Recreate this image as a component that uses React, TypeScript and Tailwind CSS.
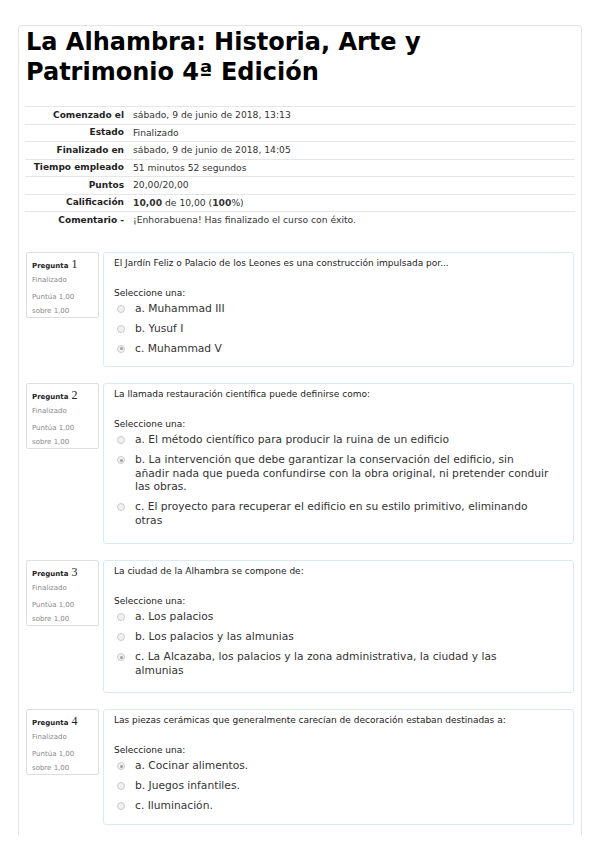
import React from "react";

type Opt = { label: React.ReactNode; checked?: boolean };
type Q = { n: number; text: string; pb: string; options: Opt[] };

const summary: [string, React.ReactNode][] = [
  ["Comenzado el", "sábado, 9 de junio de 2018, 13:13"],
  ["Estado", "Finalizado"],
  ["Finalizado en", "sábado, 9 de junio de 2018, 14:05"],
  ["Tiempo empleado", "51 minutos 52 segundos"],
  ["Puntos", "20,00/20,00"],
  [
    "Calificación",
    <>
      <b>10,00</b> de 10,00 (<b>100</b>%)
    </>,
  ],
  ["Comentario -", "¡Enhorabuena! Has finalizado el curso con éxito."],
];

const questions: Q[] = [
  {
    n: 1,
    pb: "pb-[11px]",
    text: "El Jardín Feliz o Palacio de los Leones es una construcción impulsada por...",
    options: [{ label: "a. Muhammad III" }, { label: "b. Yusuf I" }, { label: "c. Muhammad V", checked: true }],
  },
  {
    n: 2,
    pb: "pb-[16px]",
    text: "La llamada restauración científica puede definirse como:",
    options: [
      { label: "a. El método científico para producir la ruina de un edificio" },
      {
        label: (
          <>
            b. La intervención que debe garantizar la conservación del edificio, sin
            <br />
            añadir nada que pueda confundirse con la obra original, ni pretender conduir
            <br />
            las obras.
          </>
        ),
        checked: true,
      },
      { label: "c. El proyecto para recuperar el edificio en su estilo primitivo, eliminando otras" },
    ],
  },
  {
    n: 3,
    pb: "pb-[15px]",
    text: "La ciudad de la Alhambra se compone de:",
    options: [
      { label: "a. Los palacios" },
      { label: "b. Los palacios y las almunias" },
      {
        label: (
          <>
            c. La Alcazaba, los palacios y la zona administrativa, la ciudad y las
            <br />
            almunias
          </>
        ),
        checked: true,
      },
    ],
  },
  {
    n: 4,
    pb: "pb-[11px]",
    text: "Las piezas cerámicas que generalmente carecían de decoración estaban destinadas a:",
    options: [
      { label: "a. Cocinar alimentos.", checked: true },
      { label: "b. Juegos infantiles." },
      { label: "c. Iluminación." },
    ],
  },
];

function Radio({ checked }: { checked?: boolean }) {
  return (
    <span className="mt-[3px] flex h-[8px] w-[8px] shrink-0 items-center justify-center rounded-full border border-[#cccccc] bg-[#f0f0f0]">
      {checked && <span className="h-[3px] w-[3px] rounded-full bg-[#a0a0a0]" />}
    </span>
  );
}

function Question({ q }: { q: Q }) {
  return (
    <div className="flex gap-[4px] pl-[7px] pr-[7px]">
      <div className="h-[66px] w-[73px] shrink-0 rounded-[2px] border border-[#dedede] bg-white pl-[5px] pt-[5px] text-[7px] leading-[9px] text-[#888]">
        <div className="flex items-baseline gap-[3px] text-[#222]">
          <span className="font-bold">Pregunta</span>
          <span className="font-['Liberation_Serif',serif] text-[12px] leading-[12px]">{q.n}</span>
        </div>
        <div className="mt-[5px]">Finalizado</div>
        <div className="mt-[5px] leading-[14px]">
          Puntúa 1,00
          <br />
          sobre 1,00
        </div>
      </div>
      <div className={`flex-1 rounded-[3px] border border-[#d6ecf2] bg-white pl-[10px] pr-[12px] pt-[4px] ${q.pb}`}>
        <div className="text-[9px] leading-[12px] text-[#222]">{q.text}</div>
        <div className="mt-[18px] text-[9px] leading-[12px] text-[#222]">Seleccione una:</div>
        <div className="mt-[3px] flex flex-col gap-[6.5px] pr-[4px]">
          {q.options.map((o, i) => (
            <div key={i} className="flex gap-[10px] pl-[3px]">
              <Radio checked={o.checked} />
              <span className="text-[10.7px] leading-[13.5px] text-[#333]">{o.label}</span>
            </div>
          ))}
        </div>
      </div>
    </div>
  );
}

export default function App() {
  return (
    <div className="min-h-[848px] w-[599px] bg-white pl-[18px] pr-[17px] pt-[25px] font-['DejaVu_Sans',sans-serif]">
      <div className="h-[810px] rounded-t-[4px] border border-b-0 border-[#e4e4e4]">
        <h1 className="px-[7px] pt-[1px] text-[24px] font-bold leading-[30px] text-black">
          La Alhambra: Historia, Arte y
          <br />
          Patrimonio 4ª Edición
        </h1>
        <div className="mx-[6px] mt-[19px]">
          {summary.map(([k, v]) => (
            <div key={k} className="flex h-[17.5px] items-center border-t border-[#e6e6e6] text-[9.2px] text-[#333]">
              <div className="w-[100px] pr-[1px] text-right text-[9px] font-bold text-[#222]">{k}</div>
              <div className="pl-[8px]">{v}</div>
            </div>
          ))}
        </div>
        <div className="mt-[23px] flex flex-col gap-[16px]">
          {questions.map((q) => (
            <Question key={q.n} q={q} />
          ))}
        </div>
      </div>
    </div>
  );
}
